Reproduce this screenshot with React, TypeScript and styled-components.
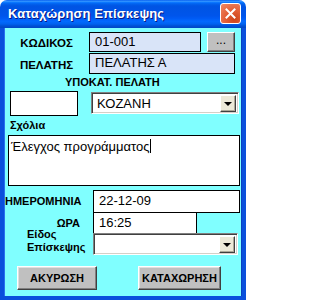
import React from 'react'
import styled, { createGlobalStyle } from 'styled-components'

const GlobalStyle = createGlobalStyle`
  html, body {
    margin: 0;
    padding: 0;
    background: #ffffff;
  }
  body {
    font-family: 'Liberation Sans', Arial, sans-serif;
  }
`

export default function App() {
  return (
    <>
      <GlobalStyle />
      <SWindow>
        <STitleBar>
          <STitle>Καταχώρηση Επίσκεψης</STitle>
          <SClose>
            <svg width="11" height="11" viewBox="0 0 11 11">
              <path d="M1.5 1.5 L9.5 9.5 M9.5 1.5 L1.5 9.5" stroke="#fff" strokeWidth="2" strokeLinecap="square" />
            </svg>
          </SClose>
        </STitleBar>
        <SBody>
          <SRow $top={4}>
            <SLabelCell>ΚΩΔΙΚΟΣ</SLabelCell>
            <SField $w={112} $h={20} $bg="#d9e4f8">01-001</SField>
            <SDots>...</SDots>
          </SRow>
          <SRow $top={1}>
            <SLabelCell>ΠΕΛΑΤΗΣ</SLabelCell>
            <SField $w={146} $h={21} $bg="#d9e4f8">ΠΕΛΑΤΗΣ Α</SField>
          </SRow>
          <SCaption $left={61} $top={2}>ΥΠΟΚΑΤ. ΠΕΛΑΤΗ</SCaption>
          <SRow $top={2} $align="flex-start">
            <SBlank />
            <SSelect $w={148} $left={13} $top={1}>
              <span>ΚΟΖΑΝΗ</span>
              <SArrow>
                <STriangle />
              </SArrow>
            </SSelect>
          </SRow>
          <SCaption $left={6} $top={3}>Σχόλια</SCaption>
          <SMemo>Έλεγχος προγράμματος<SCaret /></SMemo>
          <SRow $top={4}>
            <SSideLabel>ΗΜΕΡΟΜΗΝΙΑ</SSideLabel>
            <SField $w={147} $h={23} $bg="#ffffff">22-12-09</SField>
          </SRow>
          <SRow $top={-1}>
            <SSideLabel $right>ΩΡΑ</SSideLabel>
            <SField $w={104} $h={22} $bg="#ffffff">16:25</SField>
          </SRow>
          <SRow $top={-1} $height={22}>
            <SSideLabel $indent={23} $lift={-6}>
              Είδος
              <br />
              Επίσκεψης
            </SSideLabel>
            <SSelect $w={145} $left={0} $top={0}>
              <span />
              <SArrow>
                <STriangle />
              </SArrow>
            </SSelect>
          </SRow>
          <SButtons>
            <SButton $w={80}>ΑΚΥΡΩΣΗ</SButton>
            <SButton $w={83}>ΚΑΤΑΧΩΡΗΣΗ</SButton>
          </SButtons>
        </SBody>
      </SWindow>
    </>
  )
}

const SWindow = styled.div`
  width: 246px;
  height: 300px;
  display: flex;
  flex-direction: column;
  box-sizing: border-box;
  overflow: hidden;
`

const STitleBar = styled.div`
  height: 28px;
  flex: none;
  display: flex;
  align-items: center;
  justify-content: space-between;
  padding: 0 5px 2px 8px;
  box-sizing: border-box;
  border-radius: 7px 7px 0 0;
  background: linear-gradient(
    to bottom,
    #0058ee 0%,
    #3593ff 4%,
    #288eff 6%,
    #127dff 8%,
    #036ffc 10%,
    #0262ee 14%,
    #0057e5 20%,
    #0054e3 24%,
    #0055eb 56%,
    #005bf5 66%,
    #026afe 76%,
    #0062ef 86%,
    #0052d6 92%,
    #0046c4 100%
  );
`

const STitle = styled.span`
  color: #ffffff;
  font-weight: bold;
  font-size: 13px;
  letter-spacing: 0.1px;
  text-shadow: 1px 1px 0 #0a1883;
`

const SClose = styled.div`
  width: 19px;
  height: 19px;
  border: 1px solid #ffffff;
  border-radius: 3px;
  display: flex;
  align-items: center;
  justify-content: center;
  background: radial-gradient(circle at 70% 80%, #cc4418 0%, #e35f37 45%, #ef8a67 100%);
`

const SBody = styled.div`
  flex: 1;
  display: flex;
  flex-direction: column;
  background: #80ffff;
  border: 4px solid #0a50dc;
  border-top: none;
  box-shadow: inset 1px 0 0 #2a70ee, inset -1px 0 0 #0840c0;
`

const SRow = styled.div<{ $top: number; $align?: string; $height?: number }>`
  display: flex;
  align-items: ${({ $align }) => $align || 'center'};
  margin-top: ${({ $top }) => $top}px;
  height: ${({ $height }) => ($height ? `${$height}px` : 'auto')};
`

const SLabelCell = styled.div`
  width: 85px;
  flex: none;
  text-align: center;
  font-weight: bold;
  font-size: 11.5px;
  color: #000;
  padding-top: 2px;
`

const SSideLabel = styled.div<{ $right?: boolean; $indent?: number; $lift?: number }>`
  width: 89px;
  flex: none;
  box-sizing: border-box;
  padding-left: ${({ $indent }) => $indent ?? 1}px;
  padding-right: ${({ $right }) => ($right ? 13 : 0)}px;
  margin-top: ${({ $lift }) => $lift ?? 0}px;
  text-align: ${({ $right }) => ($right ? 'right' : 'left')};
  font-weight: bold;
  font-size: 11px;
  line-height: 13px;
  color: #000;
`

const SField = styled.div<{ $w: number; $h: number; $bg: string }>`
  width: ${({ $w }) => $w}px;
  height: ${({ $h }) => $h}px;
  box-sizing: border-box;
  flex: none;
  border: 1px solid #000;
  background: ${({ $bg }) => $bg};
  font-size: 13px;
  line-height: ${({ $h }) => $h - 3}px;
  padding-left: 5px;
  color: #000;
`

const SDots = styled.div`
  width: 28px;
  height: 20px;
  margin-left: 6px;
  box-sizing: border-box;
  background: #c0c0c0;
  border: 1px solid;
  border-color: #ffffff #404040 #404040 #ffffff;
  box-shadow: inset -1px -1px 0 #808080;
  text-align: center;
  font-size: 12px;
  line-height: 15px;
  color: #000;
`

const SCaption = styled.div<{ $left: number; $top: number }>`
  margin-left: ${({ $left }) => $left}px;
  margin-top: ${({ $top }) => $top}px;
  font-weight: bold;
  font-size: 11px;
  line-height: 13px;
  color: #000;
`

const SBlank = styled.div`
  width: 68px;
  height: 25px;
  margin-left: 6px;
  flex: none;
  box-sizing: border-box;
  border: 1px solid #000;
  background: #fff;
`

const SSelect = styled.div<{ $w: number; $left: number; $top: number }>`
  width: ${({ $w }) => $w}px;
  height: 22px;
  margin-left: ${({ $left }) => $left}px;
  margin-top: ${({ $top }) => $top}px;
  flex: none;
  box-sizing: border-box;
  display: flex;
  align-items: center;
  justify-content: space-between;
  background: #fff;
  border: 1px solid;
  border-color: #808080 #ffffff #ffffff #808080;
  box-shadow: inset 1px 1px 0 #404040, inset -1px -1px 0 #d4d0c8;
  padding: 2px 2px 2px 5px;
  font-size: 13px;
  color: #000;
`

const SArrow = styled.div`
  width: 16px;
  height: 17px;
  box-sizing: border-box;
  display: flex;
  align-items: center;
  justify-content: center;
  background: #ece9d8;
  border: 1px solid;
  border-color: #ffffff #404040 #404040 #ffffff;
  box-shadow: inset -1px -1px 0 #aca899;
`

const STriangle = styled.div`
  width: 0;
  height: 0;
  border-left: 4px solid transparent;
  border-right: 4px solid transparent;
  border-top: 4px solid #000;
  margin-top: 1px;
`

const SMemo = styled.div`
  width: 232px;
  height: 51px;
  margin: 3px 0 0 4px;
  box-sizing: border-box;
  border: 1px solid #000;
  background: #fff;
  padding: 3px 0 0 2px;
  font-size: 13px;
  color: #000;
`

const SCaret = styled.span`
  display: inline-block;
  width: 1px;
  height: 14px;
  background: #000;
  vertical-align: -2px;
`

const SButtons = styled.div`
  display: flex;
  margin-top: 11px;
  padding-left: 13px;
  gap: 41px;
`

const SButton = styled.div<{ $w: number }>`
  width: ${({ $w }) => $w}px;
  height: 24px;
  box-sizing: border-box;
  background: #c0c0c0;
  border: 1px solid;
  border-color: #ffffff #404040 #404040 #ffffff;
  box-shadow: inset -1px -1px 0 #808080, inset 1px 1px 0 #dfdfdf;
  display: flex;
  align-items: center;
  justify-content: center;
  font-weight: bold;
  font-size: 11px;
  color: #000;
`
